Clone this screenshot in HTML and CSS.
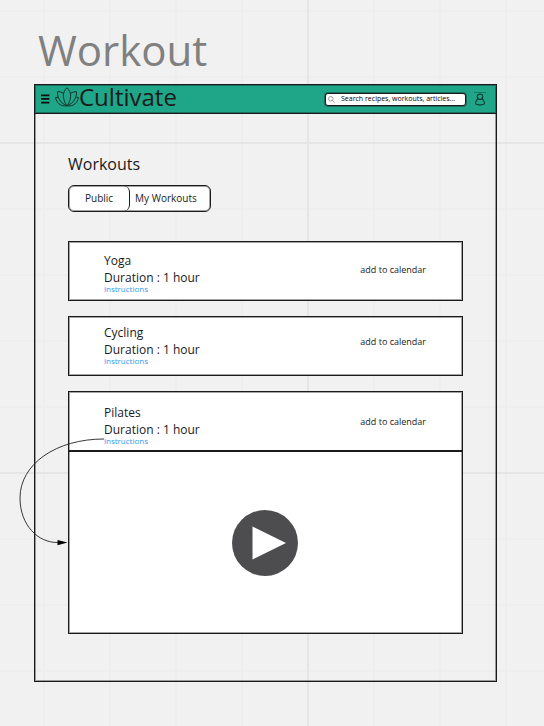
FILE: index.html
```html
<!DOCTYPE html>
<html lang="en">
<head>
<meta charset="utf-8">
<meta name="viewport" content="width=device-width, initial-scale=1">
<title>Workout</title>
<link rel="stylesheet" href="styles.css">
</head>
<body>
<h1 class="board-title">Workout</h1>
<div class="frame">
  <header class="topbar">
    <button class="icon-button" type="button" aria-label="Menu">
      <svg width="10" height="10" viewBox="0 0 10 10" fill="#0c0c0c"><path d="M1 .6h8.400v1.700H1zM1 4.100h8.400v1.700H1zM1 7.700h8.400v1.700H1z"/></svg>
    </button>
    <a class="brand" href="#">
      <svg width="24" height="20" viewBox="0 0 24 20" fill="none" stroke="#15302a" stroke-width="1" stroke-linejoin="round">
        <path d="M12 .8C9.500 3 8 6 8.400 9.500 8.800 13.500 10 16.500 12 18.800 14 16.500 15.200 13.500 15.600 9.500 16 6 14.500 3 12 .8Z"/>
        <path d="M8.500 6.500C6.500 5 4.500 4.600 2.500 4.800 2.300 10.500 5 16 12 18.800"/>
        <path d="M15.500 6.500C17.500 5 19.500 4.600 21.500 4.800 21.700 10.500 19 16 12 18.800"/>
        <path d="M2.800 10.200 .6 10.600C1.500 15.500 5 19.700 12 18.800 19 19.700 22.500 15.500 23.400 10.600L21.200 10.200"/>
      </svg>
      <span>Cultivate</span>
    </a>
    <label class="search">
      <svg width="7" height="7" viewBox="0 0 7 7" fill="none" stroke="#777" stroke-width=".7"><circle cx="2.800" cy="2.800" r="2.300"/><path d="M4.500 4.500 6.700 6.700"/></svg>
      <input type="text" aria-label="Search" placeholder="Search recipes, workouts, articles...">
    </label>
    <button class="icon-button" type="button" aria-label="Account">
      <svg width="12" height="14" viewBox="0 0 12 14" fill="none" stroke="#12372e" stroke-width="1.100"><path stroke-width=".4" d="M0 .5h12"/><circle cx="6" cy="4.700" r="2.700"/><path d="M4.200 6.800C2.200 8 1.500 9.500 1.500 11 1.500 13.500 10.500 13.500 10.500 11 10.500 9.500 9.800 8 7.800 6.800"/></svg>
    </button>
  </header>
  <main class="content">
    <h2 class="heading">Workouts</h2>
    <div class="tabs">
      <button class="tab tab-active" type="button">Public</button>
      <button class="tab" type="button">My Workouts</button>
    </div>
    <section class="list">
      <article class="card">
        <div class="card-row">
          <div class="info"><h3>Yoga</h3><p>Duration : 1 hour</p><a href="#">instructions</a></div>
          <button class="add" type="button">add to calendar</button>
        </div>
      </article>
      <article class="card">
        <div class="card-row card-row-raised">
          <div class="info"><h3>Cycling</h3><p>Duration : 1 hour</p><a href="#">instructions</a></div>
          <button class="add" type="button">add to calendar</button>
        </div>
      </article>
      <article class="card">
        <div class="card-row card-row-lowered">
          <div class="info"><h3>Pilates</h3><p>Duration : 1 hour</p><a href="#">instructions</a></div>
          <button class="add" type="button">add to calendar</button>
        </div>
        <div class="video">
          <button class="play" type="button" aria-label="Play">
            <svg width="66" height="66" viewBox="0 0 66 66"><circle cx="33" cy="33" r="33" fill="#4d4d4f"/><path d="M20.500 16.500 54 33 20.500 49.500Z" fill="#fff"/></svg>
          </button>
        </div>
        <svg class="connector" width="90" height="116" viewBox="0 0 90 116" fill="none" aria-hidden="true"><path d="M86 5C38 5 2 30 2 64 2 91 20 109 40 108.500" stroke="#222" stroke-width=".9"/><path d="M39.500 106 49.500 108.500 39.500 111.200Z" fill="#000"/></svg>
      </article>
    </section>
  </main>
</div>
</body>
</html>
```

FILE: styles.css
```css
:root {
  --ink: #1a1a1a;
  --edge: rgba(26, 26, 26, 0.4);
}

* {
  box-sizing: border-box;
}

body {
  margin: 0;
  padding: 16px 47px 44px 34px;
  min-height: 100vh;
  font-family: "Open Sans", "Noto Sans", sans-serif;
  color: var(--ink);
  background-color: #f1f1f1;
  background-image:
    linear-gradient(90deg, #e5e5e5 2px, transparent 2px),
    linear-gradient(#e5e5e5 2px, transparent 2px),
    linear-gradient(90deg, #eeeeee 2px, transparent 2px),
    linear-gradient(#eeeeee 2px, transparent 2px);
  background-size: 330px 330px, 330px 330px, 66px 66px, 66px 66px;
  background-position: 307px 0, 0 142px, 43px 0, 0 10px;
}

h1, h2, h3, p {
  margin: 0;
  font-weight: 400;
}

button {
  padding: 0;
  border: 0;
  background: none;
  font-family: inherit;
  color: inherit;
}

svg {
  display: block;
}

.board-title {
  padding-left: 4px;
  font-size: 42px;
  line-height: 68px;
  color: #808080;
}

.frame {
  border: 1px solid var(--ink);
  box-shadow: inset 0 0 0 1px var(--edge);
}

.topbar {
  display: flex;
  align-items: center;
  height: 29px;
  padding: 0 10px 0 5px;
  background: #1fa688;
  border-bottom: 1px solid var(--ink);
  box-shadow: inset 0 0 0 1px var(--edge);
}

.brand {
  display: flex;
  align-items: center;
  margin: 0 auto 5px 5px;
  font-size: 24px;
  line-height: 24px;
  color: var(--ink);
  text-decoration: none;
}

.search {
  display: flex;
  align-items: center;
  gap: 6px;
  width: 141px;
  height: 13px;
  margin-right: 8px;
  padding: 0 2px;
  background: #fff;
  border: 1px solid var(--ink);
  border-radius: 3px;
  box-shadow: 0 0 0 1px var(--edge);
}

.search input {
  flex: 1;
  min-width: 0;
  padding: 0;
  border: 0;
  outline: 0;
  background: none;
  font: 7px/10px "Open Sans", "Noto Sans", sans-serif;
}

.search input::placeholder {
  color: #000;
  opacity: 1;
}

.content {
  padding: 40px 33px 47px;
}

.heading {
  font-size: 16px;
  line-height: 20px;
}

.tabs {
  display: flex;
  width: fit-content;
  margin-top: 11px;
  border: 1px solid var(--ink);
  border-radius: 6px;
  background: #fff;
  box-shadow: inset 0 0 0 1px var(--edge);
}

.tab {
  height: 25px;
  padding: 0 13px 2px 5px;
  font-size: 10px;
}

.tab-active {
  padding: 0 16px 2px;
  border-right: 1px solid var(--ink);
  border-radius: 6px;
}

.list {
  display: grid;
  gap: 15px;
  margin-top: 29px;
}

.card {
  position: relative;
  background: #fff;
  border: 1px solid var(--ink);
  box-shadow: inset 0 0 0 1px var(--edge);
}

.card-row {
  display: flex;
  align-items: center;
  justify-content: space-between;
  min-height: 58px;
  padding: 1px 36px 0 35px;
}

.card-row-raised {
  padding-bottom: 5px;
}

.card-row-lowered {
  padding-top: 6px;
}

.info h3,
.info p {
  font-size: 12px;
  line-height: 17px;
}

.info a {
  display: block;
  font-size: 8px;
  line-height: 6px;
  color: #2d9bf0;
  text-decoration: none;
}

.add {
  padding-bottom: 4px;
  font-size: 9px;
  line-height: 12px;
}

.video {
  display: flex;
  align-items: center;
  justify-content: center;
  min-height: 183px;
  padding-right: 2px;
  border-top: 2px solid var(--ink);
}

.connector {
  position: absolute;
  top: 42px;
  left: -51px;
}
```
